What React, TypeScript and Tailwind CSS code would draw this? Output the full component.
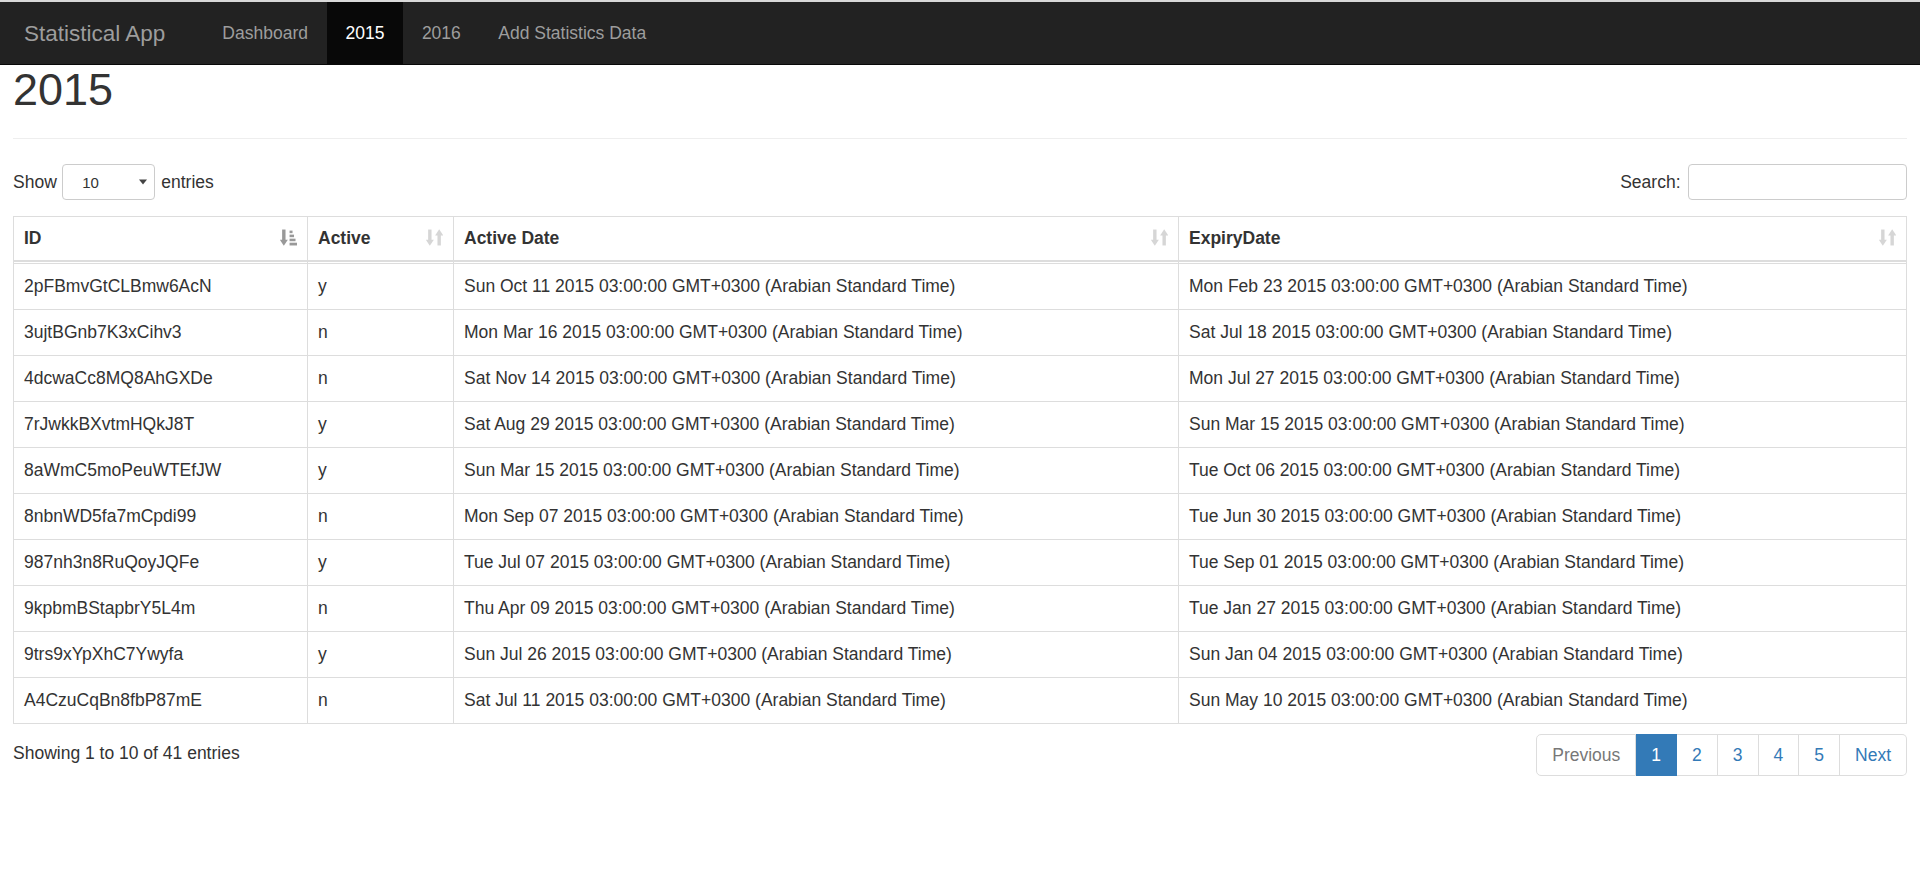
import React from "react";

const rows: [string, string, string, string][] = [
  ["2pFBmvGtCLBmw6AcN", "y", "Sun Oct 11 2015", "Mon Feb 23 2015"],
  ["3ujtBGnb7K3xCihv3", "n", "Mon Mar 16 2015", "Sat Jul 18 2015"],
  ["4dcwaCc8MQ8AhGXDe", "n", "Sat Nov 14 2015", "Mon Jul 27 2015"],
  ["7rJwkkBXvtmHQkJ8T", "y", "Sat Aug 29 2015", "Sun Mar 15 2015"],
  ["8aWmC5moPeuWTEfJW", "y", "Sun Mar 15 2015", "Tue Oct 06 2015"],
  ["8nbnWD5fa7mCpdi99", "n", "Mon Sep 07 2015", "Tue Jun 30 2015"],
  ["987nh3n8RuQoyJQFe", "y", "Tue Jul 07 2015", "Tue Sep 01 2015"],
  ["9kpbmBStapbrY5L4m", "n", "Thu Apr 09 2015", "Tue Jan 27 2015"],
  ["9trs9xYpXhC7Ywyfa", "y", "Sun Jul 26 2015", "Sun Jan 04 2015"],
  ["A4CzuCqBn8fbP87mE", "n", "Sat Jul 11 2015", "Sun May 10 2015"],
];

const suffix = " 03:00:00 GMT+0300 (Arabian Standard Time)";

function SortIcon({ sorted }: { sorted?: boolean }) {
  const color = sorted ? "#999999" : "#d6d6d6";
  return (
    <svg
      width="17"
      height="17"
      viewBox="0 0 16 16"
      className="absolute right-[10px] top-[12px]"
      fill={color}
    >
      <rect x="2" y="0.5" width="3.2" height="10.5" />
      <polygon points="-0.2,10 7.4,10 3.6,15.8" />
      {sorted ? (
        <>
          <rect x="9" y="1.5" width="2.8" height="2.4" />
          <rect x="9" y="5.3" width="4.2" height="2.4" />
          <rect x="9" y="9.1" width="5.6" height="2.4" />
          <rect x="9" y="12.9" width="7" height="2.6" />
        </>
      ) : (
        <>
          <rect x="10.8" y="5" width="3.2" height="10.5" />
          <polygon points="8.6,6 16.2,6 12.4,0.2" />
        </>
      )}
    </svg>
  );
}

export default function App() {
  const headers = ["ID", "Active", "Active Date", "ExpiryDate"];
  return (
    <div
      className="min-h-screen bg-white text-[#333] text-[17.5px] leading-[25px]"
      style={{ fontFamily: '"Liberation Sans", Arial, Helvetica, sans-serif' }}
    >
      <div className="h-[2px] bg-[#d9d9d9]" />
      <nav className="h-[63px] bg-[#222] border-b border-[#080808] flex items-stretch">
        <div className="pl-[24px] pr-[18.75px] flex items-center text-[22.5px] text-[#9d9d9d]">
          Statistical App
        </div>
        <ul className="flex items-stretch pl-[19.5px]">
          <li className="px-[18.75px] flex items-center text-[#9d9d9d]">Dashboard</li>
          <li className="px-[18.75px] flex items-center text-white bg-[#080808]">2015</li>
          <li className="px-[18.75px] flex items-center text-[#9d9d9d]">2016</li>
          <li className="px-[18.75px] flex items-center text-[#9d9d9d]">Add Statistics Data</li>
        </ul>
      </nav>

      <main className="px-[13px]">
        <div className="pb-[11px] border-b border-[#eee] mb-[25px]">
          <h1 className="m-0 mb-[12.5px] text-[45px] leading-[49.5px] font-normal">2015</h1>
        </div>

        <div className="flex justify-between items-center h-[36px]">
          <div className="flex items-center">
            <span>Show</span>
            <div className="ml-[5.5px] w-[93px] h-[36px] border border-[#ccc] rounded-[4px] flex items-center justify-between pl-[19px] pr-[7px] text-[15px]">
              <span>10</span>
              <svg width="8" height="6" viewBox="0 0 8 6" fill="#444">
                <polygon points="0,0.5 8,0.5 4,5.5" />
              </svg>
            </div>
            <span className="ml-[6px]">entries</span>
          </div>
          <div className="flex items-center">
            <span>Search:</span>
            <div className="ml-[7.5px] w-[219px] h-[36px] border border-[#ccc] rounded-[4px]" />
          </div>
        </div>

        <table className="mt-[15.5px] w-full table-fixed border-separate border-spacing-0 border border-[#ddd]">
          <colgroup>
            <col className="w-[294px]" />
            <col className="w-[146px]" />
            <col className="w-[725px]" />
            <col />
          </colgroup>
          <thead>
            <tr>
              {headers.map((h, i) => (
                <th
                  key={h}
                  className={`relative text-left font-bold pl-[10px] pr-[37px] py-[9px] border-b-2 border-[#ddd] ${
                    i < 3 ? "border-r" : ""
                  }`}
                >
                  {h}
                  <SortIcon sorted={i === 0} />
                </th>
              ))}
            </tr>
            <tr>
              {headers.map((h, i) => (
                <td key={h} className={`h-px p-0 border-[#ddd] ${i < 3 ? "border-r" : ""}`} />
              ))}
            </tr>
          </thead>
          <tbody>
            {rows.map((r) => (
              <tr key={r[0]}>
                {[r[0], r[1], r[2] + suffix, r[3] + suffix].map((c, i) => (
                  <td
                    key={i}
                    className={`px-[10px] py-[10px] border-t border-[#ddd] whitespace-nowrap ${
                      i < 3 ? "border-r" : ""
                    }`}
                  >
                    {c}
                  </td>
                ))}
              </tr>
            ))}
          </tbody>
        </table>

        <div className="flex justify-between items-start mt-[7.5px]">
          <div className="pt-[10px]">Showing 1 to 10 of 41 entries</div>
          <div className="mt-[3px] flex">
            <span className="px-[15px] py-[7.5px] border border-[#ddd] rounded-l-[5px] text-[#777] bg-white">
              Previous
            </span>
            <span className="px-[15px] py-[7.5px] border-y border-r border-[#337ab7] bg-[#337ab7] text-white">
              1
            </span>
            {["2", "3", "4", "5"].map((n) => (
              <span key={n} className="px-[15px] py-[7.5px] border-y border-r border-[#ddd] text-[#337ab7]">
                {n}
              </span>
            ))}
            <span className="px-[15px] py-[7.5px] border-y border-r border-[#ddd] rounded-r-[5px] text-[#337ab7]">
              Next
            </span>
          </div>
        </div>
      </main>
    </div>
  );
}
